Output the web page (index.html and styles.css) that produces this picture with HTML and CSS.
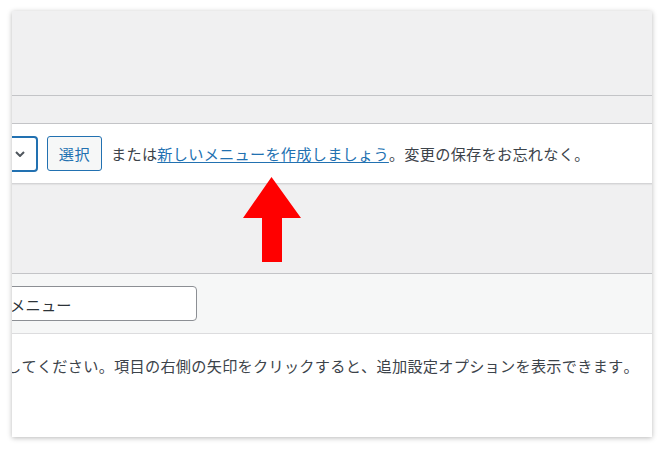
FILE: index.html
```html
<!DOCTYPE html>
<html lang="ja">
<head>
<meta charset="utf-8">
<title>メニュー</title>
<link rel="stylesheet" href="styles.css">
</head>
<body>
<div class="frame">
  <div class="panel">
    <div class="top"></div>
    <div class="band"></div>
    <div class="select-row">
      <div class="select">
        <svg class="chev" width="10" height="6" viewBox="0 0 10 6"><path d="M1 1 L5 5 L9 1" fill="none" stroke="#50575e" stroke-width="2"/></svg>
      </div>
      <button class="btn">選択</button>
      <p class="msg">または<a href="#" class="link">新しいメニューを作成しましょう</a>。変更の保存をお忘れなく。</p>
    </div>
    <div class="gap"></div>
    <div class="name-row">
      <div class="input">メニュー</div>
    </div>
    <div class="body">
      <p class="help">してください。項目の右側の矢印をクリックすると、追加設定オプションを表示できます。</p>
    </div>
    <svg class="arrow" width="58" height="85" viewBox="0 0 58 85"><polygon points="28.5,0 58,41 39,41 39,85 19,85 19,41 0,41" fill="#ff0000"/></svg>
  </div>
</div>
</body>
</html>
```

FILE: styles.css
```css
html, body {
  margin: 0;
  padding: 0;
  background: #ffffff;
}

.frame {
  padding: 11px 12px 14px 12px;
}

.panel {
  position: relative;
  width: 640px;
  height: 426px;
  background: #f0f0f1;
  box-shadow: 0 1px 5px rgba(0, 0, 0, 0.28);
  overflow: hidden;
  display: flex;
  flex-direction: column;
  font-family: "Noto Sans CJK JP", "Noto Sans", sans-serif;
  font-size: 15.2px;
  color: #3c434a;
  text-spacing-trim: space-all;
  font-kerning: none;
}

.top {
  height: 84px;
  flex: none;
  border-bottom: 1px solid #c3c4c7;
}

.band {
  height: 27px;
  flex: none;
  border-bottom: 1px solid #c3c4c7;
}

.select-row {
  height: 59px;
  flex: none;
  background: #ffffff;
  border-bottom: 1px solid #d4d4d6;
  box-shadow: 0 1px 1px rgba(0, 0, 0, 0.05);
  display: flex;
  align-items: center;
}

.select {
  flex: none;
  box-sizing: border-box;
  width: 60px;
  height: 36px;
  margin-left: -34px;
  border: 2px solid #2271b1;
  border-radius: 4px;
  background: #ffffff;
  display: flex;
  align-items: center;
  justify-content: flex-end;
  padding-right: 11px;
}

.chev {
  display: block;
}

.btn {
  flex: none;
  box-sizing: border-box;
  width: 55px;
  height: 35px;
  margin-left: 9px;
  padding: 0;
  border: 1px solid #2271b1;
  border-radius: 3px;
  background: #f6f7f7;
  color: #2271b1;
  font-family: inherit;
  font-size: 15.2px;
  letter-spacing: 0.5px;
  line-height: 1;
}

.msg {
  margin: 0 0 0 9px;
  white-space: nowrap;
  line-height: 1.4;
  letter-spacing: 0.25px;
}

.link {
  color: #2271b1;
  text-decoration: underline;
  text-underline-offset: 2px;
}

.gap {
  height: 89px;
  flex: none;
  border-bottom: 1px solid #c3c4c7;
}

.name-row {
  height: 59px;
  flex: none;
  background: #f6f7f7;
  border-bottom: 1px solid #dcdcde;
  display: flex;
  align-items: center;
}

.input {
  flex: none;
  box-sizing: border-box;
  width: 205px;
  height: 35px;
  margin-left: -20px;
  padding-left: 17px;
  border: 1px solid #8c8f94;
  border-radius: 4px;
  background: #ffffff;
  color: #2c3338;
  display: flex;
  align-items: center;
  white-space: nowrap;
  letter-spacing: 0.25px;
}

.body {
  flex: 1;
  background: #ffffff;
  padding-top: 20px;
}

.help {
  margin: 0 0 0 -6px;
  white-space: nowrap;
  line-height: 22px;
  letter-spacing: 0.25px;
}

.arrow {
  position: absolute;
  left: 231px;
  top: 166px;
}
```
